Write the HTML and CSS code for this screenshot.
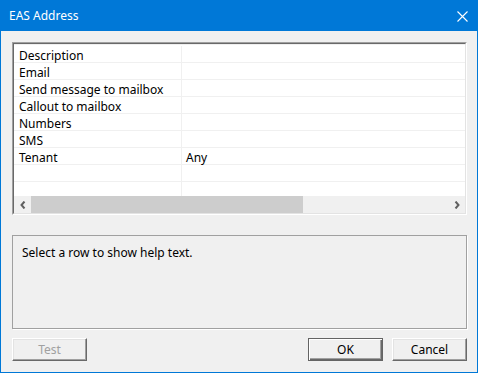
FILE: index.html
```html
<!DOCTYPE html>
<html>
<head>
<meta charset="utf-8">
<title>EAS Address</title>
<link rel="stylesheet" href="styles.css">
</head>
<body>
<div class="window">
  <div class="titlebar">
    <span class="title">EAS Address</span>
    <svg class="close" width="11" height="11" viewBox="0 0 11 11">
      <path d="M0.5 0.5 L10.5 10.5 M10.5 0.5 L0.5 10.5" stroke="#fff" stroke-width="1.1" fill="none"/>
    </svg>
  </div>
  <div class="content">
    <div class="grid">
      <div class="grid-inner">
        <div class="rows">
          <div class="row"><div class="c1">Description</div><div class="c2"></div></div>
          <div class="row"><div class="c1">Email</div><div class="c2"></div></div>
          <div class="row"><div class="c1">Send message to mailbox</div><div class="c2"></div></div>
          <div class="row"><div class="c1">Callout to mailbox</div><div class="c2"></div></div>
          <div class="row"><div class="c1">Numbers</div><div class="c2"></div></div>
          <div class="row"><div class="c1">SMS</div><div class="c2"></div></div>
          <div class="row"><div class="c1">Tenant</div><div class="c2">Any</div></div>
          <div class="row"><div class="c1"></div><div class="c2"></div></div>
          <div class="row"><div class="c1"></div><div class="c2"></div></div>
        </div>
        <div class="hscroll">
          <div class="sarrow">
            <svg width="6" height="8" viewBox="0 0 6 8"><path d="M4.5 0.5 L1.5 4 L4.5 7.5" stroke="#606060" stroke-width="2" fill="none"/></svg>
          </div>
          <div class="track"><div class="thumb"></div></div>
          <div class="sarrow">
            <svg width="6" height="8" viewBox="0 0 6 8"><path d="M1.5 0.5 L4.5 4 L1.5 7.5" stroke="#606060" stroke-width="2" fill="none"/></svg>
          </div>
        </div>
      </div>
    </div>
    <div class="help">Select a row to show help text.</div>
    <div class="buttons">
      <button class="btn disabled">Test</button>
      <div class="spacer"></div>
      <button class="btn default">OK</button>
      <button class="btn">Cancel</button>
    </div>
  </div>
</div>
</body>
</html>
```

FILE: styles.css
```css
* { box-sizing: border-box; }

body {
  margin: 0;
  font-family: "Noto Sans", "Open Sans", sans-serif;
  font-size: 12px;
  color: #000;
  background: #f0f0f0;
}

.window {
  width: 478px;
  height: 373px;
  border: 1px solid #0078d7;
  background: #f0f0f0;
  display: flex;
  flex-direction: column;
}

.titlebar {
  height: 30px;
  flex: none;
  background: #0078d7;
  color: #fff;
  display: flex;
  align-items: center;
  justify-content: space-between;
  padding: 0 9px 0 8px;
}

.title {
  font-size: 12px;
  line-height: 16px;
}

.close {
  display: block;
}

.content {
  flex: 1;
  display: flex;
  flex-direction: column;
  padding: 11px 10px 10px 11px;
}

.grid {
  height: 173px;
  flex: none;
  border: 1px solid;
  border-color: #a0a0a0 #fff #fff #a0a0a0;
}

.grid-inner {
  height: 100%;
  border: 1px solid;
  border-color: #696969 #e3e3e3 #e3e3e3 #696969;
  display: flex;
  flex-direction: column;
  background: #fff;
}

.rows {
  flex: 1;
  overflow: hidden;
  border-top: 1px solid #f0f0f0;
  padding-top: 1px;
}

.row {
  height: 17px;
  display: flex;
  border-bottom: 1px solid #f0f0f0;
  line-height: 16px;
}

.c1, .c2 {
  padding-top: 2px;
  white-space: nowrap;
}

.c1 {
  width: 168px;
  flex: none;
  padding-left: 5px;
  border-right: 1px solid #f0f0f0;
}

.c2 {
  flex: 1;
  padding-left: 4px;
}

.hscroll {
  height: 17px;
  flex: none;
  display: flex;
  background: #f0f0f0;
}

.sarrow {
  width: 17px;
  flex: none;
  display: flex;
  align-items: center;
  justify-content: center;
}

.sarrow svg { display: block; }

.track {
  flex: 1;
  display: flex;
}

.thumb {
  width: 272px;
  background: #cdcdcd;
}

.help {
  margin-top: 20px;
  height: 94px;
  flex: none;
  border: 1px solid #a0a0a0;
  box-shadow: 1px 1px 0 #fff;
  padding: 9px 9px;
  line-height: 16px;
}

.buttons {
  margin-top: 9px;
  display: flex;
  gap: 9px;
}

.spacer { flex: 1; }

.btn {
  width: 75px;
  height: 23px;
  padding: 0;
  font-family: inherit;
  font-size: 12px;
  color: #000;
  background: #f0f0f0;
  border: 1px solid;
  border-color: #fff #696969 #696969 #fff;
  box-shadow: inset -1px -1px 0 #a0a0a0, inset 1px 1px 0 #e3e3e3;
}

.btn.default {
  border: 1px solid #646464;
  box-shadow: inset 1px 1px 0 #fff, inset -1px -1px 0 #696969, inset -2px -2px 0 #a0a0a0;
}

.btn.disabled {
  color: #a0a0a0;
}
```
